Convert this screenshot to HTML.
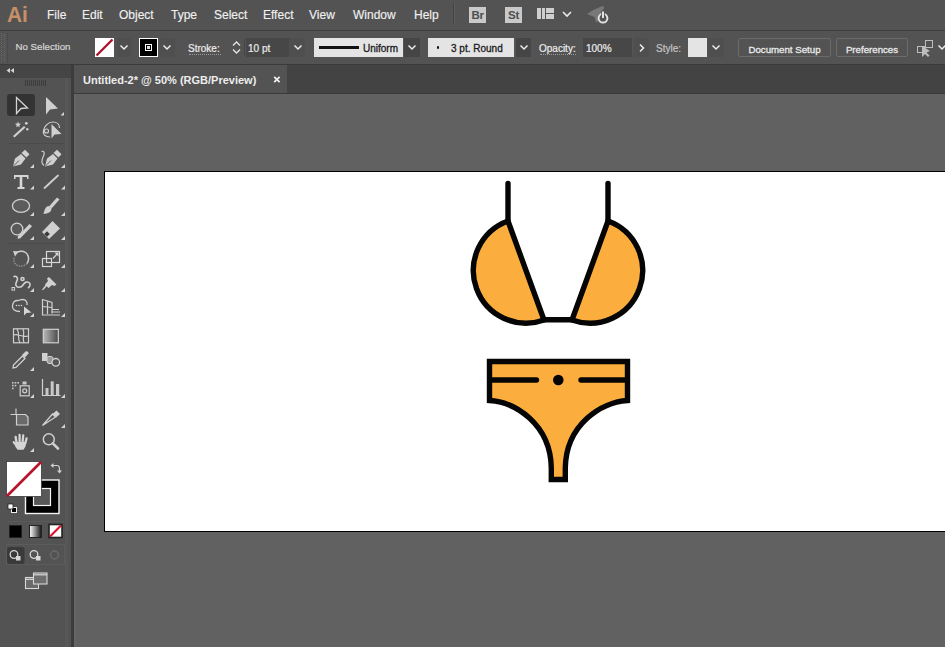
<!DOCTYPE html>
<html><head><meta charset="utf-8">
<style>
*{margin:0;padding:0;box-sizing:border-box}
html,body{width:945px;height:647px;overflow:hidden;background:#616161;font-family:"Liberation Sans",sans-serif;position:relative}
.a{position:absolute}
#menubar{left:0;top:0;width:945px;height:30px;background:#535353}
#menuline{left:0;top:30px;width:945px;height:1px;background:#3e3e3e}
#ctrl{left:0;top:31px;width:945px;height:33px;background:#535353}
#ctrlline{left:0;top:64px;width:945px;height:1px;background:#3b3b3b}
.mi{position:absolute;top:8.5px;font-size:12px;line-height:12px;color:#f0f0f0;white-space:nowrap;-webkit-text-stroke:0.15px #f0f0f0}
.br{width:17px;height:16px;background:#c9c9c9;color:#4e4e4e;font-size:11.5px;line-height:16px;text-align:center;font-weight:bold;letter-spacing:-0.3px}
#tabrow{left:73px;top:65px;width:872px;height:28px;background:#434343}
#tab{left:74px;top:65px;width:213px;height:28px;background:#535353}
#tabline{left:73px;top:93px;width:872px;height:1px;background:#3a3a3a}
#tools{left:0;top:65px;width:71px;height:582px;background:#535353}
#toolshead{left:0;top:65px;width:71px;height:13px;background:#454545}
#toolsedge{left:71px;top:65px;width:3px;height:582px;background:#3c3c3c}
#artboard{left:104px;top:171px;width:841px;height:361px;background:#fff;border:1px solid #000;border-right:none}
.ct{position:absolute;font-size:10px;line-height:10px;color:#ececec;white-space:nowrap;-webkit-text-stroke:0.2px currentColor}
.dd{background:#4f4f4f;border-radius:2px}
.btn{border:1px solid #6b6b6b;border-radius:2px;font-size:9.7px;line-height:17px;padding-top:1.5px;-webkit-text-stroke:0.3px #eee;color:#e6e6e6;text-align:center;white-space:nowrap}
</style></head><body>
<div class="a" id="menubar"></div>
<div class="a" id="menuline"></div>
<div class="a" id="ctrl"></div>
<div class="a" id="ctrlline"></div>
<div class="a" id="tabrow"></div>
<div class="a" id="tab"></div>
<div class="a" id="tabline"></div>
<div class="a" id="tools"></div>
<div class="a" id="toolshead"></div>
<div class="a" id="toolsedge"></div>
<div class="a" style="left:65px;top:78px;width:3px;height:569px;background:#575757"></div>
<div class="a" style="left:74px;top:94px;width:2px;height:553px;background:#656565"></div>
<div class="a" style="left:76px;top:94px;width:2px;height:553px;background:#616161"></div>
<div class="a" id="artboard"></div>


<!-- MENU BAR -->
<div class="a" style="left:7px;top:2.5px;font-size:22px;line-height:24px;font-weight:bold;color:#c69068;transform:scaleX(0.95);transform-origin:0 0">Ai</div>
<div class="mi" style="left:47px">File</div>
<div class="mi" style="left:82px">Edit</div>
<div class="mi" style="left:119px">Object</div>
<div class="mi" style="left:171px">Type</div>
<div class="mi" style="left:214px">Select</div>
<div class="mi" style="left:263px">Effect</div>
<div class="mi" style="left:309px">View</div>
<div class="mi" style="left:353px">Window</div>
<div class="mi" style="left:414px">Help</div>
<div class="a" style="left:453px;top:3px;width:1px;height:21px;background:#434343"></div>
<div class="a" style="left:454px;top:3px;width:1px;height:21px;background:#5c5c5c"></div>
<div class="a br" style="left:469px;top:7px">Br</div>
<div class="a br" style="left:505px;top:7px">St</div>
<div class="a" style="left:537px;top:8px;width:4px;height:11px;background:#cfcfcf"></div>
<div class="a" style="left:541.5px;top:8px;width:3.5px;height:11px;background:#cfcfcf"></div>
<div class="a" style="left:546px;top:8px;width:8px;height:5px;background:#cfcfcf"></div>
<div class="a" style="left:546px;top:14px;width:8px;height:5px;background:#cfcfcf"></div>
<svg class="a" style="left:561px;top:10px" width="12" height="8"><polyline points="2,2 6,6 10,2" fill="none" stroke="#e6e6e6" stroke-width="1.7"/></svg>
<svg class="a" style="left:583px;top:0" width="28" height="25">
 <path d="M4 14 C8 11 12 9 15 8 C17 7 20 6 21 6.5 C21 9 19 12 18 14 C16 17 15 20 14 23 C12.5 21 12 19 11.5 17 C9 16 6 15 4 14 Z" fill="#7c7c7c" opacity="0.9"/>
 <circle cx="20" cy="18.2" r="4.4" fill="#535353" stroke="#e2e2e2" stroke-width="2"/>
 <path d="M20 10.5 V17.5" stroke="#535353" stroke-width="3.6"/>
 <path d="M20 11.5 V18" stroke="#e2e2e2" stroke-width="2"/>
</svg>


<!-- CONTROL BAR -->
<div class="a" style="left:1px;top:33px;width:1px;height:29px;border-left:1px dotted #6a6a6a"></div>
<div class="a" style="left:4px;top:34px;width:1px;height:28px;border-left:1px dotted #6a6a6a"></div>
<div class="a" style="left:7px;top:33px;width:1px;height:29px;border-left:1px dotted #444"></div>
<div class="ct" style="left:15.5px;top:41.5px;font-size:9.7px;color:#d6d6d6">No Selection</div>
<!-- fill swatch -->
<div class="a" style="left:95px;top:38px;width:19px;height:19px;background:#fff;overflow:hidden">
  <svg width="19" height="19" style="display:block"><line x1="1.5" y1="17.5" x2="17.5" y2="1.5" stroke="#a8122a" stroke-width="2.3"/></svg>
</div>
<div class="a dd" style="left:117px;top:38px;width:14px;height:19px"></div>
<svg class="a" style="left:119px;top:44px" width="10" height="7"><polyline points="1.5,1.5 5,5 8.5,1.5" fill="none" stroke="#ececec" stroke-width="1.5"/></svg>
<!-- stroke swatch -->
<div class="a" style="left:139px;top:38px;width:19px;height:19px;background:#000;border:1px solid #fff"></div>
<div class="a" style="left:145px;top:44px;width:7px;height:7px;border:1px solid #fff;background:#000"></div>
<div class="a" style="left:147px;top:46px;width:3px;height:3px;background:#ddd"></div>
<div class="a dd" style="left:160px;top:38px;width:15px;height:19px"></div>
<svg class="a" style="left:162px;top:44px" width="10" height="7"><polyline points="1.5,1.5 5,5 8.5,1.5" fill="none" stroke="#ececec" stroke-width="1.5"/></svg>
<!-- Stroke: -->
<div class="ct" style="left:188px;top:43.5px">Stroke:</div>
<div class="a" style="left:189px;top:54px;width:32px;height:1px;border-top:1px dotted #9a9a9a"></div>
<svg class="a" style="left:231px;top:39px" width="11" height="17"><polyline points="2,6.5 5.5,3 9,6.5" fill="none" stroke="#e6e6e6" stroke-width="1.3"/><polyline points="2,10.5 5.5,14 9,10.5" fill="none" stroke="#e6e6e6" stroke-width="1.3"/></svg>
<div class="a" style="left:244px;top:39px;width:1px;height:17px;background:#474747"></div>
<div class="a" style="left:246px;top:38px;width:43px;height:19px;background:#474747"></div>
<div class="ct" style="left:248px;top:43.5px">10 pt</div>
<div class="a dd" style="left:289px;top:38px;width:16px;height:19px"></div>
<svg class="a" style="left:293px;top:44px" width="10" height="7"><polyline points="1.5,1.5 5,5 8.5,1.5" fill="none" stroke="#ececec" stroke-width="1.5"/></svg>
<!-- stroke profile -->
<div class="a" style="left:314px;top:38px;width:89px;height:19px;background:#e4e4e4"></div>
<div class="a" style="left:319px;top:46px;width:40px;height:3px;background:#111"></div>
<div class="ct" style="left:363px;top:43.5px;color:#1a1a1a;-webkit-text-stroke:0.3px #1a1a1a">Uniform</div>
<div class="a" style="left:404px;top:38px;width:16px;height:19px;background:#454545"></div>
<svg class="a" style="left:407px;top:44px" width="10" height="7"><polyline points="1.5,1.5 5,5 8.5,1.5" fill="none" stroke="#ececec" stroke-width="1.5"/></svg>
<!-- brush -->
<div class="a" style="left:428px;top:38px;width:86px;height:19px;background:#e4e4e4"></div>
<div class="a" style="left:436.8px;top:46.3px;width:2.5px;height:2.5px;border-radius:50%;background:#111"></div>
<div class="ct" style="left:451px;top:43.5px;color:#1a1a1a;-webkit-text-stroke:0.3px #1a1a1a">3 pt. Round</div>
<div class="a" style="left:516px;top:38px;width:15px;height:19px;background:#454545"></div>
<svg class="a" style="left:519px;top:44px" width="10" height="7"><polyline points="1.5,1.5 5,5 8.5,1.5" fill="none" stroke="#ececec" stroke-width="1.5"/></svg>
<!-- opacity -->
<div class="ct" style="left:539px;top:43.5px">Opacity:</div>
<div class="a" style="left:540px;top:54px;width:36px;height:1px;border-top:1px dotted #9a9a9a"></div>
<div class="a" style="left:583px;top:38px;width:49px;height:19px;background:#474747"></div>
<div class="ct" style="left:586px;top:43.5px">100%</div>
<div class="a dd" style="left:634px;top:38px;width:15px;height:19px"></div>
<svg class="a" style="left:638px;top:43px" width="8" height="10"><polyline points="2,1.5 5.5,5 2,8.5" fill="none" stroke="#ececec" stroke-width="1.5"/></svg>
<!-- style -->
<div class="ct" style="left:656px;top:43.5px;color:#c4c4c4">Style:</div>
<div class="a" style="left:688px;top:38px;width:19px;height:19px;background:#e4e4e4"></div>
<div class="a dd" style="left:708px;top:38px;width:16px;height:19px"></div>
<svg class="a" style="left:711px;top:44px" width="10" height="7"><polyline points="1.5,1.5 5,5 8.5,1.5" fill="none" stroke="#ececec" stroke-width="1.5"/></svg>
<!-- buttons -->
<div class="a btn" style="left:738px;top:38px;width:93px;height:19px">Document Setup</div>
<div class="a btn" style="left:836px;top:38px;width:72px;height:19px">Preferences</div>
<svg class="a" style="left:915px;top:38px" width="20" height="20">
 <rect x="2.5" y="8.5" width="7" height="6" fill="none" stroke="#bdbdbd" stroke-width="1"/>
 <rect x="10.5" y="2.5" width="7" height="7" fill="none" stroke="#bdbdbd" stroke-width="1"/>
 <path d="M7 8 L7 19 L10 16 L13 19 L14.5 17.5 L11.5 14.5 L15 13 Z" fill="#bdbdbd"/>
</svg>
<svg class="a" style="left:937px;top:44px" width="10" height="7"><polyline points="1.5,1.5 5,5 8.5,1.5" fill="none" stroke="#ececec" stroke-width="1.5"/></svg>


<!-- TAB ROW -->
<div class="a" style="left:83px;top:74.5px;font-size:11px;line-height:11px;font-weight:bold;color:#ededed;white-space:nowrap">Untitled-2* @ 50% (RGB/Preview)</div>
<svg class="a" style="left:272px;top:75px" width="9" height="9"><path d="M2.2 1.8 L7.6 7.2 M7.6 1.8 L2.2 7.2" stroke="#f0f0f0" stroke-width="1.7"/></svg>
<!-- TOOLBAR HEADER -->
<svg class="a" style="left:5px;top:67px" width="10" height="7"><path d="M5 1 L1.5 3.5 L5 6 Z M9 1 L5.5 3.5 L9 6 Z" fill="#d4d4d4"/></svg>
<div class="a" style="left:25px;top:80px;width:21px;height:6px;background:repeating-linear-gradient(90deg,#3c3c3c 0 1px,transparent 1px 2px)"></div>


<!-- TOOLBAR ICONS -->
<div class="a" style="left:8px;top:143px;width:56px;height:1px;background:#4b4b4b"></div><div class="a" style="left:8px;top:243px;width:56px;height:1px;background:#4b4b4b"></div><div class="a" style="left:8px;top:521px;width:56px;height:1px;background:#5a5a5a"></div><div class="a" style="left:6px;top:544px;width:59px;height:21px;border:1px solid #5b5b5b"></div>
<div class="a" style="left:7px;top:94px;width:28px;height:22px;background:#333;border-radius:3px"></div>
<svg class="a" style="left:0;top:0" width="72" height="647" viewBox="0 0 72 647">
<g fill="#d4d4d4" stroke="none">
 <!-- corner triangles -->
 <path d="M60.5 115.5 L64 115.5 L64 112 Z"/>
 <path d="M30 168 L34 168 L34 164 Z"/><path d="M61 168 L65 168 L65 164 Z"/>
 <path d="M30 189.5 L34 189.5 L34 185.5 Z"/><path d="M61 189.5 L65 189.5 L65 185.5 Z"/>
 <path d="M30 216 L34 216 L34 212 Z"/><path d="M61 216 L65 216 L65 212 Z"/>
 <path d="M30 240 L34 240 L34 236 Z"/><path d="M61 240 L65 240 L65 236 Z"/>
 <path d="M30 268 L34 268 L34 264 Z"/><path d="M61 268 L65 268 L65 264 Z"/>
 <path d="M30 292 L34 292 L34 288 Z"/><path d="M61 292 L65 292 L65 288 Z"/>
 <path d="M30 317 L34 317 L34 313 Z"/><path d="M61 317 L65 317 L65 313 Z"/>
 <path d="M30 371 L34 371 L34 367 Z"/>
 <path d="M30 398 L34 398 L34 394 Z"/><path d="M61 398 L65 398 L65 394 Z"/>
 <path d="M61 428 L65 428 L65 424 Z"/>
 <path d="M30 452 L34 452 L34 448 Z"/>
</g>
<g fill="none" stroke="#d4d4d4" stroke-width="1.3" stroke-linejoin="miter">
 <!-- selection -->
 <path d="M16.5 97.5 L16.5 113.5 L21 108.5 L27.5 108 Z"/>
</g>
<g fill="#d0d0d0">
 <!-- direct selection -->
 <path d="M46 97 L46 114.5 L50 109.5 L58 108.5 Z"/>
 <!-- magic wand -->
 <path d="M13 136 L24 126 L25.5 127.5 L14.5 137.5 Z"/>
 <path d="M18 121.5 L18.8 123.6 L21 123.8 L19.3 125.2 L19.8 127.3 L18 126.2 L16.2 127.3 L16.7 125.2 L15 123.8 L17.2 123.6 Z"/>
 <circle cx="26.3" cy="123.3" r="1.4"/><circle cx="27.3" cy="129.2" r="1.2"/>
 <!-- lasso arrow -->
 <path d="M51.5 124 L51.5 138.5 L54.5 134.5 L61.5 134 Z"/>
</g>
<g fill="none" stroke="#d0d0d0" stroke-width="1.2">
 <path d="M50 137 C45 137 42.5 134 43.5 130.5 C44.5 126 48 122 53 122 C57 122 59.5 124.5 59.5 128"/>
 <circle cx="46.5" cy="131" r="2"/>
</g>
<g fill="#d0d0d0">
 <!-- pen -->
 <path d="M13 166.5 L15 158.5 L21 154 L25.5 158.5 L21 164.5 Z"/>
 <path d="M21.5 153 L25 149.8 L29.5 154.3 L26.5 157.5 Z"/>
 <!-- curvature pen -->
 <path d="M45 166.5 L47 158.5 L53 154 L57.5 158.5 L53 164.5 Z"/>
 <path d="M53.5 153 L57 149.8 L61.5 154.3 L58.5 157.5 Z"/>
</g>
<g fill="none" stroke="#545454" stroke-width="0.9"><path d="M13.5 166 L19 160.5"/><path d="M45.5 166 L51 160.5"/></g>
<g fill="none" stroke="#d0d0d0" stroke-width="1.2">
 <path d="M41.5 151.5 C44 150.5 45 153 43.5 156 C41.5 160 41 163.5 44 165.5"/>
</g>
<g fill="#d6d6d6">
 <!-- type T -->
 <path d="M14 175 H28.5 V179 H27 V177 H22.3 V187 H24.5 V189 H17.5 V187 H19.7 V177 H15.5 V179 H14 Z"/>
</g>
<g fill="none" stroke="#d0d0d0" stroke-width="1.8" stroke-linecap="round">
 <path d="M44.5 188 L58 175.5"/>
</g>
<!-- ellipse -->
<ellipse cx="21" cy="205.8" rx="8.6" ry="6.5" fill="#5c5c5c" stroke="#d0d0d0" stroke-width="1.3"/>
<g fill="#d0d0d0">
 <!-- brush -->
 <path d="M57 197.5 L59.5 199.5 L51.5 208.5 L49 206.5 Z"/>
 <path d="M49 206 C46 206 44.5 209 43.5 214 C48 213.5 51.5 212 51.5 208.5 Z"/>
</g>
<!-- shaper -->
<circle cx="17" cy="229" r="5.8" fill="#5a5a5a" stroke="#d0d0d0" stroke-width="1.3"/>
<g fill="#d0d0d0"><path d="M18 236 L29.5 224 L32 226.3 L20.3 238.2 L17.5 238.8 Z"/></g>
<!-- eraser -->
<g fill="#d0d0d0"><path d="M52.5 221 L60 228.5 L49 239 L42 232 Z"/></g>
<path d="M44.3 233.9 L47.1 236.7 L49.8 234 L47 231.2 Z" fill="#3a3a3a"/>
<!-- rotate -->
<g fill="none" stroke="#d0d0d0" stroke-width="1.5">
 <path d="M15.5 253.5 C18 251 22.5 250.5 25.5 252.5 C29 255 29.5 260 27 263.5"/>
</g>
<g fill="none" stroke="#9a9a9a" stroke-width="1.2" stroke-dasharray="1.5 1"><path d="M27 263.5 C24 267 18 267 15 263.5 C13.5 261.5 13.5 259 14.5 257"/></g>
<path d="M13 251 L18.5 251.5 L15 256.5 Z" fill="#d0d0d0"/>
<!-- scale -->
<g fill="none" stroke="#d6d6d6" stroke-width="1.2">
 <rect x="46.5" y="251.5" width="13" height="11"/>
 <rect x="42.5" y="258.5" width="9" height="8"/>
 <path d="M53 258.5 L57.5 253.5"/>
</g>
<path d="M58.5 252.5 L58.5 256.5 L54.5 252.5 Z" fill="#d6d6d6"/>
<!-- width/warp -->
<g fill="none" stroke="#d0d0d0" stroke-width="1.6">
 <path d="M13.5 277 C15 275.5 17.5 276.5 17.5 279 C17.5 281 15 283 16 285.5 C17 288 21 288 23 285 C25 282 27 281 29.5 283 C31 284.5 29.5 287 28 288"/>
 <circle cx="22.5" cy="279" r="1.5"/>
</g>
<rect x="12" y="287.5" width="2.6" height="2.6" fill="none" stroke="#d0d0d0" stroke-width="1"/>
<!-- pin -->
<g fill="#d0d0d0">
 <path d="M49 277 L56.5 284.5 L54.5 286 L52 285 L48.5 288 L45 284.5 L48 281 L47 278.5 Z"/>
 <path d="M42 289.5 L46 284.5 L47.2 285.7 L43 290.3 Z"/>
</g>
<!-- shape builder -->
<g fill="none" stroke="#d0d0d0" stroke-width="1.3">
 <path d="M20 311.5 C14.5 311.5 12 309 12.5 305.5 C13 302 15 300.5 17.5 300.5 C19.5 300.5 20.5 299.5 22.5 299.5 C26 299.5 27.5 302 27 305"/>
</g>
<g fill="#d0d0d0"><circle cx="16.5" cy="305.5" r="0.8"/><circle cx="19" cy="305.5" r="0.8"/><circle cx="21.5" cy="305.5" r="0.8"/></g>
<path d="M24 306.5 L24 315.5 L26.5 313 L31.5 312.5 Z" fill="#d6d6d6"/>
<!-- perspective grid -->
<g fill="none" stroke="#d0d0d0" stroke-width="1.2">
 <path d="M42.5 299 V315 H60"/>
 <path d="M42.5 299.5 L52 302.5 V313.5"/>
 <path d="M47.5 301 V314"/>
 <path d="M42.5 306.5 L52 307.5"/>
 <path d="M52 309.5 H59 M52 312 H60"/>
</g>
<!-- mesh -->
<g fill="none" stroke="#d0d0d0" stroke-width="1.2">
 <rect x="13.5" y="328.8" width="15" height="14"/>
 <path d="M17 329 C20 333 17 338 20 343 M13.5 335 C18 333 23 338 28.5 336 M23 329 C25 333 22 338 24 343"/>
</g>
<!-- gradient -->
<defs><linearGradient id="gr" x1="0" x2="1" y1="0" y2="0"><stop offset="0" stop-color="#b8b8b8"/><stop offset="1" stop-color="#4a4a4a"/></linearGradient>
<linearGradient id="gr2" x1="0" x2="1" y1="0" y2="0"><stop offset="0" stop-color="#fff"/><stop offset="1" stop-color="#111"/></linearGradient></defs>
<rect x="43.3" y="329.3" width="15" height="13.5" fill="url(#gr)" stroke="#d0d0d0" stroke-width="1.2"/>
<!-- eyedropper -->
<g fill="none" stroke="#d0d0d0" stroke-width="1.3">
 <path d="M13 368 L13.5 365 L22.5 356 L25 358.5 L16 367.5 Z"/>
</g>
<path d="M22 355 L25.5 351.5 C27 350.5 29 352 28.5 353.5 L25 357.5 Z" fill="#d0d0d0"/>
<!-- blend -->
<rect x="42" y="353" width="5.5" height="8" fill="#d0d0d0"/>
<rect x="47" y="356.5" width="6" height="7" rx="2" fill="#9a9a9a" stroke="#d0d0d0" stroke-width="1"/>
<circle cx="55.8" cy="362.3" r="3.8" fill="#545454" stroke="#d0d0d0" stroke-width="1.3"/>
<!-- symbol sprayer -->
<g fill="#c8c8c8">
 <rect x="12" y="382" width="1.6" height="1.6"/><rect x="14.7" y="382" width="1.6" height="1.6"/><rect x="17.4" y="382" width="1.6" height="1.6"/>
 <rect x="12" y="384.8" width="1.6" height="1.6"/><rect x="14.7" y="384.8" width="1.6" height="1.6"/>
 <rect x="12" y="387.6" width="1.6" height="1.6"/>
 <rect x="22.5" y="381.5" width="4" height="3"/>
</g>
<rect x="20.2" y="385.8" width="9" height="10" fill="none" stroke="#d0d0d0" stroke-width="1.2"/>
<circle cx="24.7" cy="390.8" r="2" fill="none" stroke="#d0d0d0" stroke-width="1.2"/>
<!-- graph -->
<path d="M42.5 379 V395.5 H60.5" fill="none" stroke="#d0d0d0" stroke-width="1.2"/>
<g fill="#c8c8c8"><rect x="45.5" y="388" width="3" height="7"/><rect x="50.7" y="381.3" width="3" height="13.7"/><rect x="56" y="384" width="3.2" height="11"/></g>
<!-- artboard -->
<path d="M16.5 414.5 H25.5 L28 417 V425 H16.5 Z" fill="#6a6a6a" stroke="#d0d0d0" stroke-width="1.2"/>
<path d="M16 408.5 V414 M10.5 414.5 H16" stroke="#d0d0d0" stroke-width="1.1"/>
<!-- slice -->
<g fill="none" stroke="#d0d0d0" stroke-width="1.3"><path d="M42.5 425.5 L52.5 414 L55.5 417 Z"/></g>
<path d="M52.5 414 L56.5 410.5 L60 414 L56 417.5 Z" fill="#d0d0d0"/>
<!-- hand -->
<g stroke="#d4d4d4" stroke-width="2.3" stroke-linecap="round" fill="none">
 <path d="M16.6 443 L15.6 436.8"/><path d="M19.6 442 L19.6 434.8"/><path d="M22.6 442 L23.2 435.5"/><path d="M25.2 443.5 L26.6 438.3"/>
 <path d="M13.8 442.2 L17 446"/>
</g>
<path d="M15.8 442 H26.3 L25.5 446.5 L23.5 449.8 H17.5 L15.3 446.5 Z" fill="#d4d4d4"/>
<!-- zoom -->
<circle cx="48.8" cy="439.3" r="5.5" fill="none" stroke="#d0d0d0" stroke-width="1.5"/>
<path d="M52.8 443.3 L58 448.5" stroke="#d0d0d0" stroke-width="2.6" stroke-linecap="round"/>
</svg>


<!-- FILL/STROKE -->
<svg class="a" style="left:0;top:450px" width="72" height="197" viewBox="0 450 72 197">
 <rect x="25.5" y="480" width="33.5" height="33.5" fill="#000" stroke="#f4f4f4" stroke-width="1.4"/>
 <rect x="33.5" y="488.5" width="17" height="17" fill="#585858" stroke="#f4f4f4" stroke-width="1.2"/>
 <rect x="6.5" y="461.5" width="35" height="35" fill="#fff" stroke="#3a3a3a" stroke-width="0.8"/>
 <path d="M7 496 L41 462" stroke="#b8122c" stroke-width="2.6"/>
 <!-- swap -->
 <g fill="none" stroke="#d0d0d0" stroke-width="1.2"><path d="M52.5 465.5 H57 C59 465.5 59.5 467 59.5 469 V471"/></g>
 <path d="M50.5 465.5 L53.5 463 V468 Z M59.5 473.5 L57 470.5 H62 Z" fill="#d0d0d0"/>
 <!-- default -->
 <rect x="11.5" y="507.5" width="5" height="5" fill="#000" stroke="#eee" stroke-width="1"/>
 <rect x="8" y="504" width="5" height="5" fill="#fff" stroke="#222" stroke-width="0.8"/>
 <!-- color modes -->
 <rect x="9.5" y="525.5" width="12" height="12" fill="#000" stroke="#222" stroke-width="1"/>
 <rect x="29.5" y="525.5" width="12" height="12" fill="url(#gr2)" stroke="#222" stroke-width="1"/>
 <rect x="49" y="524.5" width="13" height="13" fill="#fff" stroke="#222" stroke-width="1.6"/>
 <path d="M50 536.5 L61 525.5" stroke="#e0102a" stroke-width="2.2"/>
 <!-- draw modes -->
 <rect x="7" y="547" width="17.5" height="17" rx="2" fill="#3a3a3a"/>
 <g fill="none" stroke="#d8d8d8" stroke-width="1.3">
  <circle cx="14" cy="554.5" r="3.8"/>
  <circle cx="34" cy="554.5" r="3.8"/>
 </g>
 <rect x="16" y="556" width="4.5" height="4.5" fill="#d8d8d8"/>
 <rect x="36" y="556" width="4.5" height="4.5" fill="#d8d8d8"/>
 <circle cx="54.5" cy="555" r="4" fill="none" stroke="#6a6a6a" stroke-width="1.5"/>
 <!-- screen mode -->
 <rect x="25.5" y="577.5" width="13" height="11" fill="#6a6a6a" stroke="#d8d8d8" stroke-width="1.1"/>
 <path d="M25.5 579.3 H38.5" stroke="#d8d8d8" stroke-width="1.2"/>
 <rect x="33.5" y="573" width="13.5" height="11" fill="#6e6e6e" stroke="#d8d8d8" stroke-width="1.1"/>
 <path d="M33.5 574.8 H47" stroke="#d8d8d8" stroke-width="1.2"/>
</svg>

<!-- artwork -->
<svg class="a" style="left:0;top:0" width="945" height="647" viewBox="0 0 945 647">
  <g stroke="#050505" stroke-width="5.4" fill="#fbae3d" stroke-linejoin="miter" stroke-linecap="round">
    <line x1="508" y1="183.5" x2="508" y2="221"/>
    <line x1="608" y1="183.5" x2="608" y2="221"/>
    <path d="M508 221 A50 50 0 0 0 544 320 Z"/>
    <path d="M608 221 A50 50 0 0 1 572 320 Z"/>
    <line x1="544" y1="319.8" x2="572" y2="319.8"/>
    <path d="M489.5 361.5 H627.5 V400.5 C602 402 566 424 565.3 468 V479.5 H551.3 V468 C550.6 424 515 402 489.5 400.5 Z" stroke-linejoin="miter"/>
    <line x1="492" y1="380" x2="536.5" y2="380"/>
    <line x1="581" y1="380" x2="627" y2="380"/>
    <circle cx="558.3" cy="380" r="5.3" fill="#050505" stroke="none"/>
  </g>
</svg>
</body></html>
